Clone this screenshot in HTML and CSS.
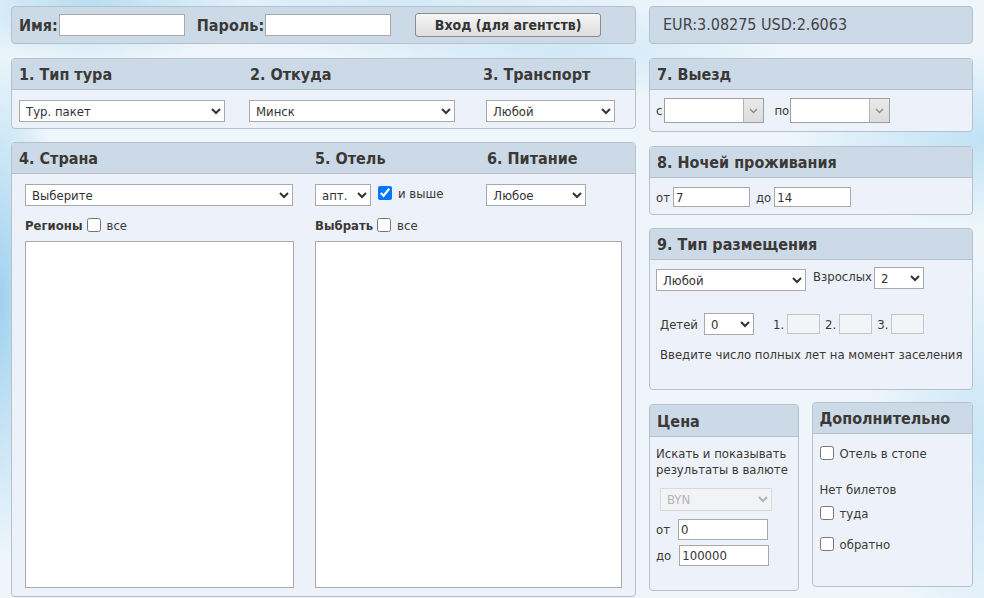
FILE: index.html
```html
<!DOCTYPE html>
<html lang="ru">
<head>
<meta charset="utf-8">
<title>Поиск туров</title>
<link rel="stylesheet" href="styles.css">
</head>
<body>
<div class="page">
  <div class="col-left">
    <div class="panel topbar">
      <label class="login-label">Имя:</label><input class="login-input" type="text">
      <label class="login-label pass">Пароль:</label><input class="login-input" type="text">
      <button class="btn-login">Вход (для агентств)</button>
    </div>

    <div class="panel p1">
      <div class="head head-3">
        <span>1. Тип тура</span><span>2. Откуда</span><span>3. Транспорт</span>
      </div>
      <div class="body body-3">
        <select class="sel sel-type"><option>Тур. пакет</option></select>
        <select class="sel sel-from"><option>Минск</option></select>
        <select class="sel sel-trans"><option>Любой</option></select>
      </div>
    </div>

    <div class="panel p2">
      <div class="head head-p2">
        <span class="h-country">4. Страна</span><span class="h-hotel">5. Отель</span><span>6. Питание</span>
      </div>
      <div class="body body-p2">
        <div class="c-col">
          <select class="sel sel-country"><option>Выберите</option></select>
          <div class="chk-row"><b>Регионы</b><input type="checkbox" class="cb"><span>все</span></div>
          <div class="listbox"></div>
        </div>
        <div class="c-col">
          <div class="hotel-row">
            <select class="sel sel-cat"><option>апт.</option></select>
            <input type="checkbox" class="cb cb-blue" checked><span class="higher">и выше</span>
            <select class="sel sel-meal"><option>Любое</option></select>
          </div>
          <div class="chk-row"><b>Выбрать</b><input type="checkbox" class="cb"><span>все</span></div>
          <div class="listbox"></div>
        </div>
      </div>
    </div>
  </div>

  <div class="col-right">
    <div class="panel rates">EUR:3.08275 USD:2.6063</div>

    <div class="panel p7">
      <div class="head">7. Выезд</div>
      <div class="body body-p7">
        <span class="s">с</span>
        <div class="combo"><div class="combo-field"></div><div class="combo-btn"><svg width="9" height="6" viewBox="0 0 9 6"><path d="M1 1l3.5 3.5L8 1" fill="none" stroke="#8a8a8a" stroke-width="1.3"/></svg></div></div>
        <span class="po">по</span>
        <div class="combo"><div class="combo-field"></div><div class="combo-btn"><svg width="9" height="6" viewBox="0 0 9 6"><path d="M1 1l3.5 3.5L8 1" fill="none" stroke="#8a8a8a" stroke-width="1.3"/></svg></div></div>
      </div>
    </div>

    <div class="panel p8">
      <div class="head">8. Ночей проживания</div>
      <div class="body body-p8">
        <span>от</span><input class="txt nights" type="text" value="7">
        <span class="do">до</span><input class="txt nights" type="text" value="14">
      </div>
    </div>

    <div class="panel p9">
      <div class="head">9. Тип размещения</div>
      <div class="body body-p9">
        <div class="row9a">
          <select class="sel sel-room"><option>Любой</option></select>
          <span class="adults">Взрослых</span>
          <select class="sel sel-num"><option>2</option></select>
        </div>
        <div class="row9b">
          <span>Детей</span>
          <select class="sel sel-num sel-kids"><option>0</option></select>
          <span class="n1">1.</span><input class="age" type="text" disabled>
          <span class="n">2.</span><input class="age" type="text" disabled>
          <span class="n">3.</span><input class="age" type="text" disabled>
        </div>
        <div class="hint">Введите число полных лет на момент заселения</div>
      </div>
    </div>

    <div class="bottom-row">
      <div class="panel price">
        <div class="head">Цена</div>
        <div class="body body-price">
          <div class="price-text">Искать и показывать<br>результаты в валюте</div>
          <select class="sel sel-cur" disabled><option>BYN</option></select>
          <div class="price-line"><span>от</span><input class="txt p-in" type="text" value="0"></div>
          <div class="price-line"><span>до</span><input class="txt p-in" type="text" value="100000"></div>
        </div>
      </div>
      <div class="panel extra">
        <div class="head">Дополнительно</div>
        <div class="body body-extra">
          <label class="ex-row"><input type="checkbox" class="cb"><span>Отель в стопе</span></label>
          <div class="no-tickets">Нет билетов</div>
          <label class="ex-row r2"><input type="checkbox" class="cb"><span>туда</span></label>
          <label class="ex-row r3"><input type="checkbox" class="cb"><span>обратно</span></label>
        </div>
      </div>
    </div>
  </div>
</div>
</body>
</html>
```
FILE: styles.css
```css
html, body {
  margin: 0;
  padding: 0;
  height: 100%;
}
body {
  font-family: "DejaVu Sans Condensed", "DejaVu Sans", Tahoma, sans-serif;
  font-size: 13px;
  color: #3b3936;
  overflow: hidden;
  background:
    radial-gradient(ellipse 60px 260px at 0px 300px, rgba(150,205,238,0.9), rgba(150,205,238,0) 100%),
    radial-gradient(ellipse 160px 60px at 90px 6px, rgba(170,215,240,0.8), rgba(170,215,240,0) 100%),
    radial-gradient(ellipse 240px 50px at 560px 52px, rgba(195,225,245,0.7), rgba(195,225,245,0) 100%),
    radial-gradient(ellipse 200px 90px at 984px 140px, rgba(180,220,243,0.8), rgba(180,220,243,0) 100%),
    radial-gradient(ellipse 120px 200px at 984px 450px, rgba(185,222,244,0.7), rgba(185,222,244,0) 100%),
    radial-gradient(ellipse 300px 60px at 400px 0px, rgba(205,230,246,0.8), rgba(205,230,246,0) 100%),
    #eef6fb;
}
.page {
  display: flex;
  gap: 13px;
  padding: 6px 0 0 11px;
}
.col-left {
  width: 625px;
  display: flex;
  flex-direction: column;
}
.col-right {
  width: 324px;
  display: flex;
  flex-direction: column;
}
.panel {
  box-sizing: border-box;
  border: 1px solid #b7c1cc;
  border-radius: 4px;
  background: #edf1f9;
  overflow: hidden;
}
.head {
  height: 30px;
  line-height: 31px;
  background: #ccdae8;
  border-bottom: 1px solid #b7c1cc;
  font-weight: bold;
  font-size: 16px;
  padding-left: 7px;
  color: #3b3936;
}
.sel {
  font-family: "DejaVu Sans Condensed", "DejaVu Sans", Tahoma, sans-serif;
  font-size: 13px;
  color: #333;
  height: 22px;
  border: 1px solid #a9a9a9;
  background: #fff;
  border-radius: 0;
  padding: 0 2px;
  margin: 0;
  box-sizing: border-box;
}
.txt {
  font-family: "DejaVu Sans Condensed", "DejaVu Sans", Tahoma, sans-serif;
  font-size: 13px;
  color: #333;
  border: 1px solid #a9a9a9;
  background: #fff;
  box-sizing: border-box;
  height: 20px;
  padding: 0 2px;
  margin: 0;
}
.cb {
  width: 14px;
  height: 14px;
  margin: 0;
  accent-color: #0075ff;
}

/* top bar */
.topbar {
  height: 38px;
  background: #ccdae8;
  display: flex;
  align-items: center;
  padding-left: 7px;
}
.login-label {
  font-weight: bold;
  font-size: 16px;
}
.login-label.pass {
  margin-left: 12px;
}
.login-input {
  width: 126px;
  height: 22px;
  box-sizing: border-box;
  border: 1px solid #a9a9a9;
  margin: 0 0 0 1px;
  background: #fff;
}
.btn-login {
  margin-left: 24px;
  width: 186px;
  height: 24px;
  font-family: "DejaVu Sans Condensed", "DejaVu Sans", Tahoma, sans-serif;
  font-weight: bold;
  font-size: 14px;
  color: #333;
  border: 1px solid #8c8c8c;
  border-radius: 3px;
  background: linear-gradient(#f6f6f6, #dedede);
  padding: 0;
}

/* panel 1 */
.p1 {
  margin-top: 14px;
  height: 71px;
}
.head-3 {
  display: grid;
  grid-template-columns: 231px 233px 1fr;
}
.body-3 {
  display: grid;
  grid-template-columns: 230px 237px 1fr;
  padding: 10px 0 0 7px;
}
.sel-type { width: 206px; }
.sel-from { width: 206px; }
.sel-trans { width: 129px; }

/* panel 2 */
.p2 {
  margin-top: 13px;
  height: 455px;
}
.head-p2 {
  display: grid;
  grid-template-columns: 296px 172px 1fr;
}
.body-p2 {
  display: flex;
  gap: 21px;
  padding: 10px 0 0 13px;
}
.c-col {
  display: flex;
  flex-direction: column;
}
.c-col:first-child { width: 269px; }
.c-col:last-child { width: 307px; }
.sel-country { width: 268px; }
.chk-row {
  display: flex;
  align-items: center;
  height: 20px;
  margin-top: 9px;
}
.chk-row b {
  font-size: 13px;
}
.chk-row .cb {
  margin: 0 6px 0 4px;
}
.listbox {
  margin-top: 6px;
  height: 345px;
  background: #fff;
  border: 1px solid #a9a9a9;
}
.hotel-row {
  display: flex;
  align-items: center;
  height: 22px;
}
.sel-cat { width: 56px; }
.cb-blue { margin-left: 7px; margin-top: -4px; }
.higher { margin-left: 6px; margin-top: -4px; }
.sel-meal { width: 100px; margin-left: 43px; }

/* rates */
.rates {
  height: 38px;
  line-height: 36px;
  background: #ccdae8;
  font-size: 16px;
  padding-left: 13px;
  color: #444;
}

/* panel 7 */
.p7 {
  margin-top: 14px;
  height: 74px;
}
.body-p7 {
  display: flex;
  align-items: center;
  padding: 8px 0 0 6px;
  font-size: 13px;
}
.s { margin-right: 1px; }
.combo {
  display: flex;
  flex: none;
  width: 100px;
  height: 25px;
  box-sizing: border-box;
  border: 1px solid #a0a0a0;
  background: #fff;
}
.s + .combo { margin-left: 1px; }
.combo-field { flex: 1; }
.combo-btn {
  width: 19px;
  border-left: 1px solid #b5b5b5;
  background: linear-gradient(#eaeaea, #dcdcdc);
  display: flex;
  align-items: center;
  justify-content: center;
}
.po { margin-left: 10px; margin-right: 1px; }

/* panel 8 */
.p8 {
  margin-top: 14px;
  height: 69px;
}
.body-p8 {
  display: flex;
  align-items: center;
  padding: 9px 0 0 6px;
}
.nights {
  width: 77px;
  margin-left: 3px;
}
.do { margin-left: 6px; }

/* panel 9 */
.p9 {
  margin-top: 13px;
  height: 162px;
}
.body-p9 {
  padding: 7px 0 0 6px;
}
.row9a {
  display: flex;
  align-items: flex-start;
}
.sel-room { width: 150px; margin-top: 2px; }
.adults { margin-left: 7px; margin-top: 2px; }
.sel-num { width: 50px; margin-left: 2px; }
.row9b {
  display: flex;
  align-items: center;
  margin-top: 22px;
  padding-left: 4px;
}
.sel-kids { margin-left: 6px; }
.n1 { margin-left: 19px; }
.n { margin-left: 5px; }
.age {
  width: 33px;
  height: 20px;
  box-sizing: border-box;
  margin: 0 0 0 3px;
  border: 1px solid #c6c6c6;
  background: #f3f4f7;
}
.hint {
  margin-top: 12px;
  padding-left: 4px;
}

/* bottom */
.bottom-row {
  display: flex;
  gap: 13px;
  margin-top: 12px;
  align-items: flex-start;
}
.price {
  width: 150px;
  height: 187px;
  margin-top: 2px;
}
.price .head { height: 31px; line-height: 33px; }
.body-price {
  padding: 9px 0 0 6px;
  line-height: 16px;
}
.sel-cur {
  width: 112px;
  height: 23px;
  margin: 10px 0 0 4px;
  color: #999;
  background: #f4f4f4;
  border-color: #cfcfcf;
}
.price-line {
  display: flex;
  align-items: center;
  margin-top: 8px;
}
.price-line + .price-line { margin-top: 5px; }
.p-in {
  width: 90px;
  height: 21px;
  margin-left: 8px;
}
.extra {
  width: 162px;
  height: 185px;
}
.body-extra {
  padding: 10px 0 0 7px;
}
.ex-row {
  display: flex;
  align-items: center;
  height: 18px;
}
.ex-row .cb { margin-right: 6px; }
.no-tickets { margin-top: 20px; }
.r2 { margin-top: 7px; }
.r3 { margin-top: 13px; }
```
